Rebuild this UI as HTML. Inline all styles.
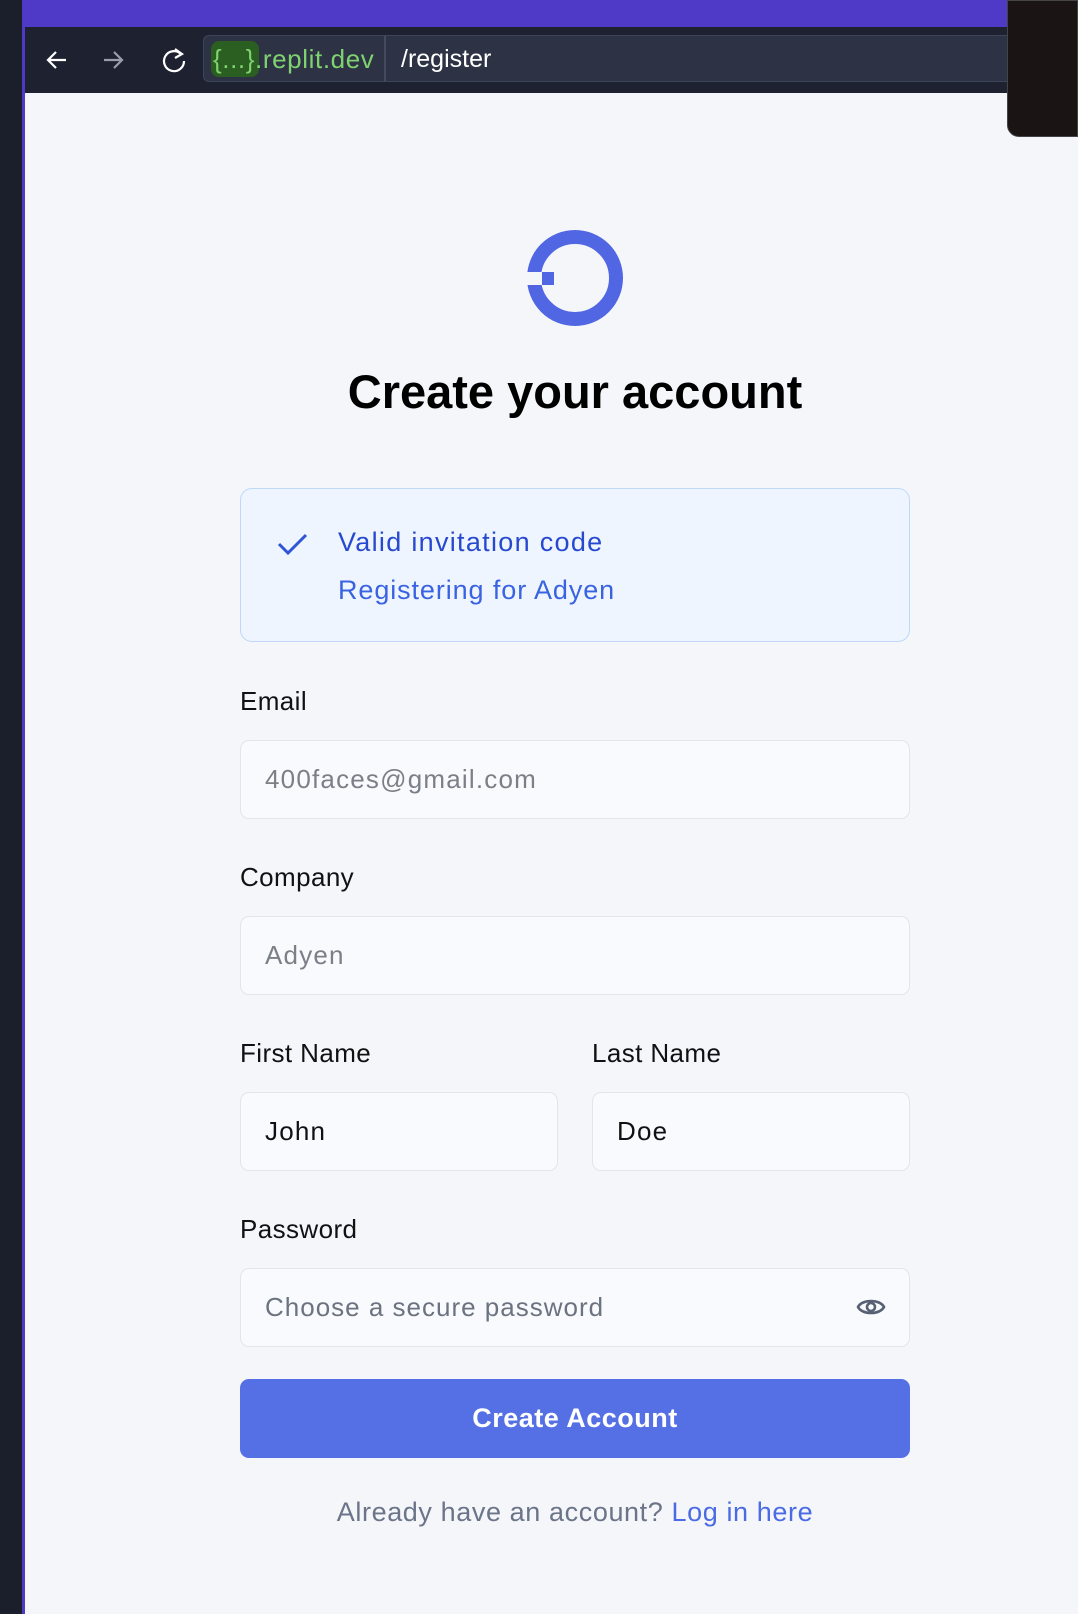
<!DOCTYPE html>
<html><head><meta charset="utf-8"><style>
*{box-sizing:border-box;margin:0;padding:0}
body{width:1078px;height:1614px;overflow:hidden;background:#f5f6fa;font-family:"Liberation Sans",sans-serif;position:relative}
.abs{position:absolute}
.lbl{position:absolute;left:240px;font-size:26px;color:#111;line-height:30px;letter-spacing:0.4px}
.inp{position:absolute;background:#f9fafd;border:1.5px solid #e2e5eb;border-radius:9px;font-size:26px;line-height:76px;padding-left:24px;color:#7b7f88;letter-spacing:1.2px}
</style></head><body>
<div class="abs" style="left:0;top:0;width:23px;height:1614px;background:#1b1f2c"></div>
<div class="abs" style="left:22px;top:0;width:3px;height:1614px;background:#4f3ac7"></div>
<div class="abs" style="left:23px;top:0;width:1055px;height:27px;background:#4f3ac7"></div>
<div class="abs" style="left:25px;top:27px;width:1053px;height:66px;background:#1e2130"></div>
<svg class="abs" style="left:44px;top:45px" width="150" height="30" viewBox="0 0 150 30">
<path d="M22 15H4M12 7L4 15L12 23" stroke="#fff" stroke-width="2.2" fill="none"/>
<path d="M60 15H78M70 7L78 15L70 23" stroke="#9a9ea8" stroke-width="2.2" fill="none"/>
<path d="M137 9A10 10 0 1 0 140 16" stroke="#fff" stroke-width="2.2" fill="none"/>
<path d="M131 4L138 9L131 13" stroke="#fff" stroke-width="2.2" fill="none"/>
</svg>
<div class="abs" style="left:203px;top:35px;width:820px;height:47px;background:#2d3244;border:1.5px solid #3f4559;border-radius:6px"></div>
<div class="abs" style="left:211px;top:41px;width:48px;height:36px;background:#2b5f22;border-radius:8px"></div>
<div class="abs" style="left:213px;top:43px;font-size:26px;color:#7fd36f;line-height:32px;letter-spacing:0.6px">{...}.replit.dev</div>
<div class="abs" style="left:384px;top:36px;width:1.5px;height:45px;background:#454b5e"></div>
<div class="abs" style="left:401px;top:43px;font-size:25px;color:#fff;line-height:32px">/register</div>
<div class="abs" style="left:1007px;top:0;width:71px;height:137px;background:#1a1414;border-radius:0 0 0 12px;border:1px solid #444"></div>
<svg class="abs" style="left:520px;top:225px" width="110" height="110" viewBox="0 0 110 110">
<circle cx="55" cy="53" r="41" stroke="#5066e3" stroke-width="14" fill="none"/>
<rect x="5" y="47" width="17" height="13" fill="#f5f6fa"/>
<rect x="22" y="47" width="12" height="13" fill="#5066e3"/>
</svg>
<div class="abs" style="left:0;width:1150px;top:364px;text-align:center;font-size:47px;font-weight:bold;color:#000;line-height:56px">Create your account</div>
<div class="abs" style="left:240px;top:488px;width:670px;height:154px;background:#eff5fe;border:1.5px solid #bfd8fa;border-radius:12px"></div>
<svg class="abs" style="left:276px;top:530px" width="34" height="28" viewBox="0 0 34 28"><path d="M3 14L12 23L30 5" stroke="#2f56d4" stroke-width="3" fill="none"/></svg>
<div class="abs" style="left:338px;top:526px;font-size:27px;color:#2749cf;line-height:32px;letter-spacing:1.3px">Valid invitation code</div>
<div class="abs" style="left:338px;top:574px;font-size:27px;color:#3a63e2;line-height:32px;letter-spacing:0.9px">Registering for Adyen</div>
<div class="lbl" style="top:686px">Email</div>
<div class="inp" style="left:240px;top:740px;width:670px;height:79px">400faces@gmail.com</div>
<div class="lbl" style="top:862px">Company</div>
<div class="inp" style="left:240px;top:916px;width:670px;height:79px">Adyen</div>
<div class="lbl" style="top:1038px">First Name</div>
<div class="lbl" style="top:1038px;left:592px">Last Name</div>
<div class="inp" style="left:240px;top:1092px;width:318px;height:79px;color:#111">John</div>
<div class="inp" style="left:592px;top:1092px;width:318px;height:79px;color:#111">Doe</div>
<div class="lbl" style="top:1214px">Password</div>
<div class="inp" style="left:240px;top:1268px;width:670px;height:79px;color:#6b7280;letter-spacing:1px">Choose a secure password</div>
<svg class="abs" style="left:856px;top:1295px" width="30" height="24" viewBox="0 0 30 24"><path d="M2 12C6 4 24 4 28 12C24 20 6 20 2 12Z" stroke="#586174" stroke-width="2.6" fill="none"/><circle cx="15" cy="12" r="4" stroke="#586174" stroke-width="2.6" fill="none"/></svg>
<div class="abs" style="left:240px;top:1379px;width:670px;height:79px;background:#5470e4;border-radius:9px;color:#fff;font-weight:bold;font-size:27px;text-align:center;line-height:79px;letter-spacing:0.5px">Create Account</div>
<div class="abs" style="left:0;width:1150px;top:1496px;text-align:center;font-size:27px;color:#6b7488;line-height:32px;letter-spacing:0.6px">Already have an account? <span style="color:#4a6be3">Log in here</span></div>
</body></html>
